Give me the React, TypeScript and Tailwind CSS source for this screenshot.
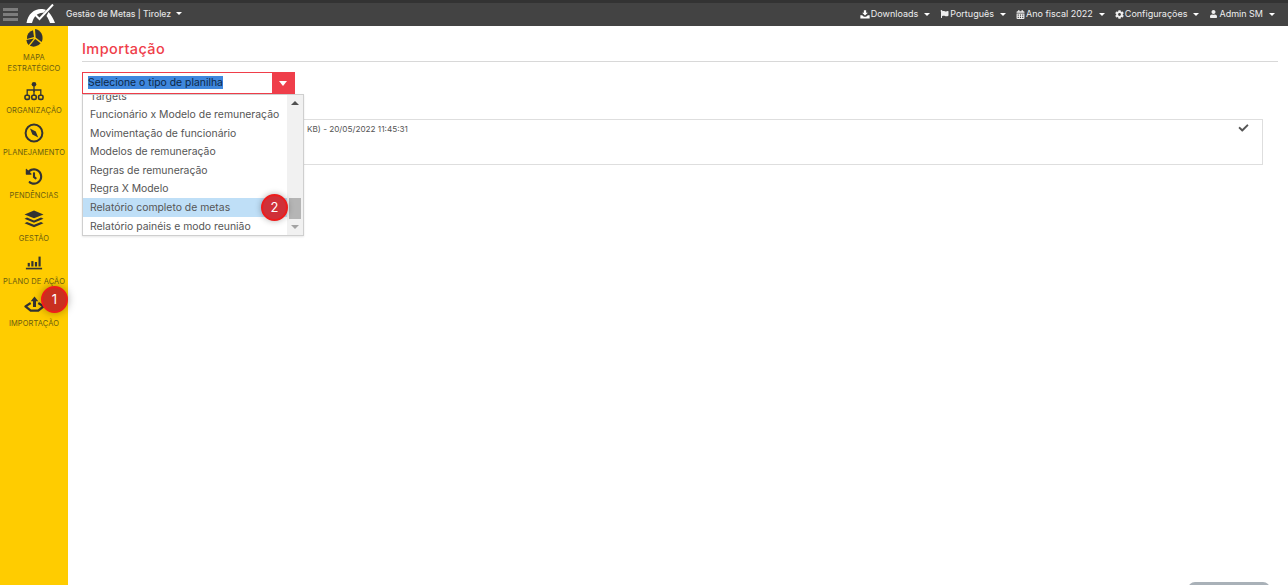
import { FaCalendarAlt, FaCheck, FaCog, FaFlag, FaHistory, FaUser } from "react-icons/fa";
import type { ReactNode } from "react";

const PieIcon = () => (
  <svg viewBox="0 0 20 20" className="h-[20px] w-[20px]">
    <path d="M9 2.2 L10 9 L3 11 A7.8 7.8 0 0 1 9 2.2Z" fill="#333" />
    <path d="M11 1 A9 9 0 0 1 17.6 14 L11.6 9.6Z" fill="#333" />
    <path d="M2.4 12 L10 10.4 L4.6 17 A8 8 0 0 1 2.4 12Z" fill="#333" />
    <path d="M5.8 17.8 L11.2 11 L16.6 15.2 A9 9 0 0 1 5.8 17.8Z" fill="#333" />
  </svg>
);

const SitemapIcon = () => (
  <svg viewBox="0 0 20 20" className="h-[20px] w-[20px]" fill="none" stroke="#333" strokeWidth="1.3">
    <circle cx="10" cy="3.2" r="2.3" fill="#333" stroke="none" />
    <path d="M10 5 V11 M3.2 14 V9 H16.8 V14" />
    <path d="M10 9 V14" />
    <rect x="1" y="14.2" width="4.4" height="4.2" rx="1.4" strokeWidth="1.6" />
    <rect x="7.8" y="14.2" width="4.4" height="4.2" rx="1.4" strokeWidth="1.6" />
    <rect x="14.6" y="14.2" width="4.4" height="4.2" rx="1.4" strokeWidth="1.6" />
  </svg>
);

const CompassIcon = () => (
  <svg viewBox="0 0 20 20" className="h-[20px] w-[20px]" fill="none">
    <circle cx="10" cy="10" r="8.4" stroke="#333" strokeWidth="2" />
    <path d="M6 5.6 L11.8 8.4 L14.2 14.4 L8.4 11.6Z" fill="#333" />
  </svg>
);

const LayersIcon = () => (
  <svg viewBox="0 0 20 18" className="h-[18px] w-[20px]" fill="#333">
    <path d="M10 0.5 L19.5 4.4 L10 8.3 L0.5 4.4Z" />
    <path d="M3 7.6 L10 10.4 L17 7.6 L19.5 8.8 L10 12.7 L0.5 8.8Z" />
    <path d="M3 12 L10 14.8 L17 12 L19.5 13.2 L10 17.2 L0.5 13.2Z" />
  </svg>
);

const BarsIcon = () => (
  <svg viewBox="0 0 20 20" className="h-[18px] w-[18px]" fill="#333">
    <rect x="3" y="11" width="2.4" height="4" />
    <rect x="7" y="9" width="2.4" height="6" />
    <rect x="11" y="10" width="2.4" height="5" />
    <rect x="15" y="4" width="2.4" height="11" />
    <rect x="1" y="16.4" width="18" height="1.8" />
  </svg>
);

const ImportIcon = () => (
  <svg viewBox="0 0 22 20" className="h-[19px] w-[21px]" fill="none">
    <path d="M7 8.5 L1.5 12 L7 16.5 H15 L20.5 12 L15 8.5" stroke="#333" strokeWidth="2.4" strokeLinejoin="round" />
    <path d="M11 1.5 L15 6.5 H12.6 V12.5 H9.4 V6.5 H7Z" fill="#333" />
  </svg>
);

const DownloadIcon = () => (
  <svg viewBox="0 0 14 12" className="h-[9px] w-[10px]" fill="white">
    <path d="M5.4 0 H8.6 V3.5 H11 L7 7.5 L3 3.5 H5.4Z" />
    <path d="M0.5 7 H3 L5.5 9 H8.5 L11 7 H13.5 V11.5 H0.5Z" />
  </svg>
);

const Caret = () => <span className="ml-[5px] inline-block border-x-[3px] border-t-[3px] border-x-transparent border-t-white" />;

function NavItem({ icon, label, className }: { icon: ReactNode; label: ReactNode; className: string }) {
  return (
    <div className={`flex flex-col items-center text-center ${className}`}>
      <div className="flex h-[22px] shrink-0 items-center justify-center text-[#333]">{icon}</div>
      <div className="mt-[4px] text-[7.5px] leading-[10.5px] tracking-[0.1px] text-[#6b5c10] uppercase">{label}</div>
    </div>
  );
}

function TopLink({ icon, label }: { icon: ReactNode; label: string }) {
  return (
    <div className="flex items-center gap-[1px] text-[9px] text-[#eeeeee]">
      {icon}
      <span>{label}</span>
      <Caret />
    </div>
  );
}

const options = [
  "Funcionário x Modelo de remuneração",
  "Movimentação de funcionário",
  "Modelos de remuneração",
  "Regras de remuneração",
  "Regra X Modelo",
  "Relatório completo de metas",
  "Relatório painéis e modo reunião",
];

export default function App() {
  return (
    <div className="flex h-[585px] w-[1288px] flex-col overflow-hidden bg-white font-['Inter','Noto_Sans',sans-serif]">
      <header className="flex h-[26px] shrink-0 items-center border-t-[3px] border-[#333] bg-[#434343] pr-[13px] pb-[1px] pl-[3px] text-white">
        <div className="flex w-[15px] flex-col gap-[2px]">
          <span className="h-[3px] bg-[#7d7d7d]" />
          <span className="h-[3px] bg-[#7d7d7d]" />
          <span className="h-[3px] bg-[#7d7d7d]" />
        </div>
        <svg viewBox="0 0 30 21" className="ml-[8px] h-[21px] w-[30px]">
          <path d="M0.5 19 C2 10 8 5 15 5 C17 5 18.5 5.3 20 6 L17.5 8.8 C12 8.4 8 12 6 19 Z" fill="white" />
          <path d="M22.5 8 C25.5 11 27.5 15 29 19 H24 C23 16 22 14 20.5 12 Z" fill="white" />
          <path d="M9 10.5 L13.5 15 L27 0.5" stroke="white" strokeWidth="2" fill="none" />
        </svg>
        <div className="ml-[10px] flex items-center text-[8.6px] font-medium text-[#e4e4e4]">
          Gestão de Metas | Tirolez
          <Caret />
        </div>
        <div className="ml-auto flex items-center gap-[10px]">
          <TopLink icon={<DownloadIcon />} label="Downloads" />
          <TopLink icon={<FaFlag className="h-[8px] w-[9px]" />} label="Português" />
          <TopLink icon={<FaCalendarAlt className="h-[9px] w-[9px]" />} label="Ano fiscal 2022" />
          <TopLink icon={<FaCog className="h-[9px] w-[9px]" />} label="Configurações" />
          <TopLink icon={<FaUser className="h-[8px] w-[9px]" />} label="Admin SM" />
        </div>
      </header>

      <div className="flex min-h-0 flex-1">
        <aside className="relative flex w-[68px] shrink-0 flex-col items-center bg-[#ffcc00] pt-[1px]">
          <NavItem className="h-[52.5px]" icon={<PieIcon />} label={<>Mapa<br />Estratégico</>} />
          <NavItem className="h-[42.8px]" icon={<SitemapIcon />} label="Organização" />
          <NavItem className="h-[42.8px]" icon={<CompassIcon />} label="Planejamento" />
          <NavItem className="h-[42.8px]" icon={<FaHistory className="h-[17px] w-[18px]" />} label="Pendências" />
          <NavItem className="h-[42.8px]" icon={<LayersIcon />} label="Gestão" />
          <NavItem className="h-[42.8px]" icon={<BarsIcon />} label="Plano de ação" />
          <NavItem className="h-[42.8px]" icon={<ImportIcon />} label="Importação" />
          <div className="absolute top-[260px] left-[41px] flex h-[27px] w-[27px] items-center justify-center rounded-full border-2 border-[#ee1c1c] bg-[#c9301f] text-[13px] text-white shadow-[0_0_8px_rgba(0,0,0,0.35)]">
            1
          </div>
        </aside>

        <main className="relative min-w-0 flex-1 pt-[13px] pr-[10px] pl-[14px]">
          <h1 className="border-b border-[#d8d8d8] pb-[3px] text-[14.5px] leading-[19px] font-medium tracking-[0.4px] text-[#ef3e4a]">
            Importação
          </h1>

          <div className="relative mt-[10px] w-[213px]">
            <div className="flex h-[22px] items-center border border-[#ef3e4a] bg-white">
              <div className="min-w-0 flex-1 pl-[5px] text-[10.4px] leading-[18px]">
                <span className="bg-[#3f87dd] text-[#0d2747]">Selecione o tipo de planilha</span>
              </div>
              <div className="flex h-full w-[22px] items-center justify-center bg-[#ef3e4a]">
                <span className="border-x-[4px] border-t-[5px] border-x-transparent border-t-white" />
              </div>
            </div>

            <div className="absolute top-[22px] left-0 z-10 flex h-[142px] w-[222px] overflow-hidden border border-[#cfcfcf] bg-white text-[10.4px] text-[#555] shadow-[0_1px_2px_rgba(0,0,0,0.1)]">
              <div className="min-w-0 flex-1">
                <div className="-mt-[7px] h-[17.5px] pl-[7px] leading-[17px]">Targets</div>
                {options.map((o) => (
                  <div
                    key={o}
                    className={`flex h-[18.6px] items-center whitespace-nowrap pl-[7px] ${o === "Relatório completo de metas" ? "bg-[#bfdff7]" : ""}`}
                  >
                    {o}
                  </div>
                ))}
              </div>
              <div className="flex w-[16px] shrink-0 flex-col items-center bg-[#f1f1f1]">
                <div className="flex h-[16px] items-center justify-center">
                  <span className="border-x-[4px] border-b-[4px] border-x-transparent border-b-[#505050]" />
                </div>
                <div className="mt-[87px] h-[21px] w-[12px] bg-[#b5b5b5]" />
                <div className="flex h-[16px] items-center justify-center">
                  <span className="border-x-[4px] border-t-[4px] border-x-transparent border-t-[#a3a3a3]" />
                </div>
              </div>
            </div>

            <div className="absolute top-[122px] left-[179px] z-20 flex h-[27px] w-[27px] items-center justify-center rounded-full border-2 border-[#ee1c1c] bg-[#d03038] text-[13px] text-white shadow-[0_0_6px_rgba(0,0,0,0.3)]">
              2
            </div>
          </div>

          <div className="mt-[25px] flex h-[46px] w-[1181px] items-start justify-between border border-[#dedede] pt-[3px] pr-[13px] pl-[224px] text-[8.2px] text-[#555]">
            <span>KB) - 20/05/2022 11:45:31</span>
            <FaCheck className="h-[10px] w-[11px] text-[#555]" />
          </div>

          <div className="absolute right-[18px] -bottom-[4px] h-[7px] w-[82px] rounded-t-full bg-[#a9b1b8]" />
        </main>
      </div>
    </div>
  );
}
